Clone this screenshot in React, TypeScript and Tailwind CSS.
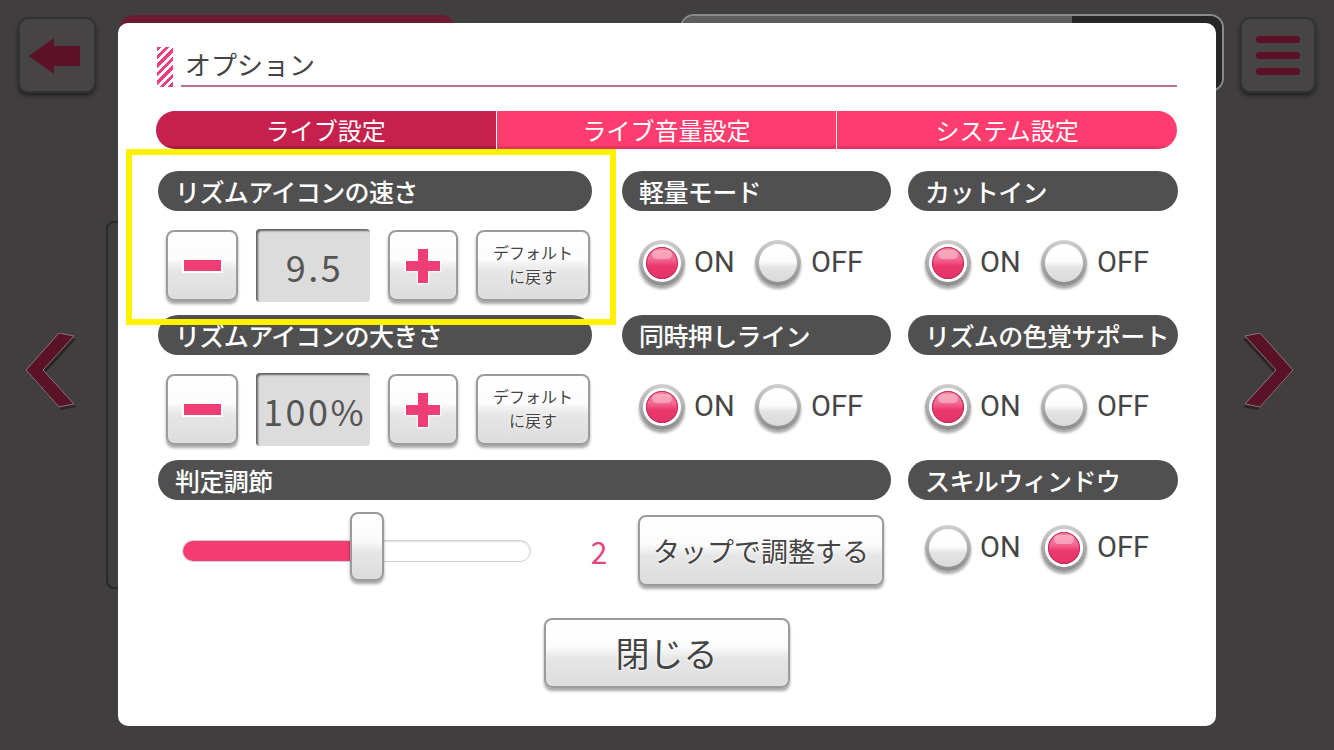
import React from "react";

const jp = "[font-family:'Noto_Sans_CJK_JP','Noto_Sans',sans-serif]";
const btn =
  "flex items-center justify-center rounded-[8px] border-2 border-[#9b9b9b] bg-[linear-gradient(180deg,#ffffff_0%,#fcfcfc_40%,#e6e6e6_58%,#dddddd_100%)] shadow-[0_3px_3px_rgba(0,0,0,0.35)]";
const label = "text-[#444] [text-shadow:0_0_2px_#fff,0_0_3px_#fff]";

const Header = ({ text, className = "" }: { text: string; className?: string }) => (
  <div
    className={`flex h-[40px] items-center whitespace-nowrap rounded-full bg-[#505050] pl-[17px] text-[25px] leading-none font-medium tracking-[-0.6px] text-white ${className}`}
  >
    {text}
  </div>
);

const Radio = ({ on }: { on: boolean }) => (
  <div className="h-[46px] w-[46px] shrink-0 rounded-full bg-[linear-gradient(180deg,#cfcfcf,#8c8c8c)] p-[4px] shadow-[0_3px_3px_rgba(0,0,0,0.35)]">
    {on ? (
      <div className="h-full w-full rounded-full bg-white p-[3px]">
        <div className="relative h-full w-full rounded-full bg-[linear-gradient(180deg,#f6869f_0%,#f26690_40%,#ec3a70_58%,#e4336a_100%)] shadow-[inset_0_0_0_1px_#c72a5c]">
          <div className="absolute left-[6px] right-[6px] top-[3px] h-[9px] rounded-full bg-white/35" />
        </div>
      </div>
    ) : (
      <div className="h-full w-full rounded-full bg-[linear-gradient(180deg,#ffffff_0%,#fdfdfd_45%,#e4e4e4_62%,#d9d9d9_100%)]" />
    )}
  </div>
);

const OnOff = ({ on }: { on: boolean }) => (
  <div className="flex h-full items-center pb-[6px] pl-[17px] [font-family:Roboto,sans-serif] text-[29px] leading-none text-[#454545]">
    <Radio on={on} />
    <span className="ml-[9px] w-[41px]">ON</span>
    <div className="ml-[20px]">
      <Radio on={!on} />
    </div>
    <span className="ml-[10px]">OFF</span>
  </div>
);

const Plus = () => (
  <svg width="40" height="40" viewBox="0 0 40 40">
    <path
      d="M15 3h10v12h12v10h-12v12h-10v-12h-12v-10h12z"
      fill="#ef3e76"
      stroke="#fff"
      strokeWidth="2.5"
      paintOrder="stroke"
    />
  </svg>
);

const Stepper = ({ value }: { value: string }) => (
  <div className="flex h-full items-center gap-[18px] pl-[8px]">
    <div className={`${btn} h-[71px] w-[72px]`}>
      <div className="h-[11px] w-[37px] bg-[#ef3e76] shadow-[0_0_0_2px_#fff]" />
    </div>
    <div className="flex h-[73px] w-[114px] items-center justify-center rounded-[4px] bg-[#dcdcdc] pl-[3px] text-[36px] leading-none tracking-[2.5px] text-[#555] shadow-[inset_2px_2px_2px_rgba(0,0,0,0.55)]">
      {value}
    </div>
    <div className={`${btn} h-[71px] w-[70px]`}>
      <Plus />
    </div>
    <div className={`${btn} h-[71px] w-[114px]`}>
      <p className={`pb-[4px] text-center text-[16px] leading-[24px] ${label}`}>
        デフォルト
        <br />
        に戻す
      </p>
    </div>
  </div>
);

const Chevron = ({ right = false }: { right?: boolean }) => (
  <svg width="52" height="78" viewBox="0 0 52 78" className={right ? "-scale-x-100" : ""}>
    <polygon points="35,3 50,6 19,40 50,74 35,77 2,40" fill="#2a2526" />
    <polygon points="33,0 48,3 17,37 48,71 33,74 0,37" fill="#5a1228" stroke="#8f7479" strokeWidth="1" />
  </svg>
);

export default function App() {
  return (
    <div className={`relative h-[750px] w-[1334px] overflow-hidden bg-[#403e3f] ${jp}`}>
      {/* dimmed screen behind the dialog */}
      <div className="flex h-full flex-col">
        <div className="flex items-start">
          <div className="ml-[18px] mt-[17px] h-[76px] w-[78px] rounded-[10px] border-2 border-[#333] bg-[#464445] shadow-[0_3px_4px_rgba(0,0,0,0.45)]">
            <svg width="74" height="72" viewBox="0 0 74 72">
              <path d="M9 37 L34 19 L34 27 L60 27 L60 47 L34 47 L34 55 Z" fill="#5c1226" />
            </svg>
          </div>
          <div className="ml-[24px] mt-[15px] h-[30px] w-[335px] rounded-t-[14px] bg-[#6c1b30]" />
          <div className="ml-[225px] mt-[14px] flex h-[78px] w-[544px] overflow-hidden rounded-[14px] border-2 border-[#8a8a8a]">
            <div className="flex-1 bg-[#5e5e5e]" />
            <div className="w-[150px] bg-[#262626]" />
          </div>
          <div className="ml-[16px] mt-[17px] flex h-[76px] w-[76px] flex-col items-center justify-center gap-[9px] rounded-[10px] border-2 border-[#333] bg-[#464445] shadow-[0_3px_4px_rgba(0,0,0,0.45)]">
            <div className="h-[7px] w-[44px] rounded-full bg-[#5a1025]" />
            <div className="h-[7px] w-[44px] rounded-full bg-[#5a1025]" />
            <div className="h-[7px] w-[44px] rounded-full bg-[#5a1025]" />
          </div>
        </div>
        <div className="mt-[128px] flex items-start">
          <div className="ml-[106px] h-[368px] w-[20px] rounded-l-[8px] border-2 border-[#2a2a2a]" />
        </div>
        <div className="absolute left-[26px] top-[333px]">
          <Chevron />
        </div>
        <div className="absolute left-[1241px] top-[333px]">
          <Chevron right />
        </div>
      </div>

      {/* option dialog */}
      <div className="absolute left-[118px] top-[23px] flex h-[703px] w-[1098px] flex-col rounded-[10px] bg-white pl-[38px] pr-[39px] pt-[24px]">
        <div className="flex h-[40px] items-end">
          <div className="ml-[1px] h-[40px] w-[16px] bg-[repeating-linear-gradient(135deg,#f0407a_0px,#f0407a_3px,#ffffff_3px,#ffffff_6px)]" />
          <div className="ml-[8px] flex h-[40px] flex-1 items-center border-b-2 border-[#bb6f98] pb-[5px] pl-[4px] text-[26px] leading-none text-[#444]">
            オプション
          </div>
        </div>

        <div className="mt-[24px] flex h-[38px] overflow-hidden rounded-full text-[24px] leading-none text-white shadow-[inset_0_-3px_0_rgba(0,0,0,0.12)]">
          <div className="flex flex-1 items-center justify-center bg-[#c6214e] shadow-[inset_0_-3px_0_rgba(0,0,0,0.15)]">ライブ設定</div>
          <div className="flex flex-1 items-center justify-center border-l border-white bg-[#ff3c6e] shadow-[inset_0_-3px_0_rgba(0,0,0,0.1)]">ライブ音量設定</div>
          <div className="flex flex-1 items-center justify-center border-l border-white bg-[#ff3c6e] shadow-[inset_0_-3px_0_rgba(0,0,0,0.1)]">システム設定</div>
        </div>

        <div className="ml-[2px] mt-[22px] grid grid-cols-[464px_286px_270px] grid-rows-[40px_73px] gap-y-[18px]">
          <Header text="リズムアイコンの速さ" className="w-[434px]" />
          <Header text="軽量モード" className="w-[269px]" />
          <Header text="カットイン" />
          <Stepper value="9.5" />
          <OnOff on />
          <OnOff on />
        </div>

        <div className="ml-[2px] mt-[13px] grid grid-cols-[464px_286px_270px] grid-rows-[40px_73px] gap-y-[18px]">
          <Header text="リズムアイコンの大きさ" className="w-[434px]" />
          <Header text="同時押しライン" className="w-[269px]" />
          <Header text="リズムの色覚サポート" />
          <Stepper value="100%" />
          <OnOff on />
          <OnOff on />
        </div>

        <div className="ml-[2px] mt-[14px] grid grid-cols-[464px_286px_270px] grid-rows-[39px_75px] gap-y-[14px]">
          <Header text="判定調節" className="col-span-2 h-[39px] w-[733px]" />
          <Header text="スキルウィンドウ" className="h-[39px]" />
          <div className="col-span-2 flex items-center">
            <div className="relative ml-[24px] flex h-[22px] w-[349px] rounded-full border border-[#d0d0d0] bg-white shadow-[inset_0_1px_2px_rgba(0,0,0,0.12)]">
              <div className="h-full w-[176px] rounded-full bg-[#f53c72]" />
              <div className="absolute left-[167px] top-[-29px] h-[69px] w-[34px] rounded-[8px] border-2 border-[#9a9a9a] bg-[linear-gradient(180deg,#ffffff_0%,#fafafa_42%,#e6e6e6_58%,#dcdcdc_100%)] shadow-[0_3px_3px_rgba(0,0,0,0.35)]" />
            </div>
            <span className="ml-[59px] w-[18px] text-center text-[30px] leading-none text-[#e2457b]">2</span>
            <div className={`${btn} ml-[30px] h-[71px] w-[246px] text-[27px] leading-none ${label}`}>
              タップで調整する
            </div>
          </div>
          <OnOff on={false} />
        </div>

        <div className={`${btn} mx-auto mt-[30px] h-[70px] w-[246px] text-[34px] leading-none ${label}`}>
          閉じる
        </div>

        <div className="pointer-events-none absolute left-[8px] top-[126px] h-[176px] w-[490px] border-[6px] border-[#fff200]" />
      </div>
    </div>
  );
}
